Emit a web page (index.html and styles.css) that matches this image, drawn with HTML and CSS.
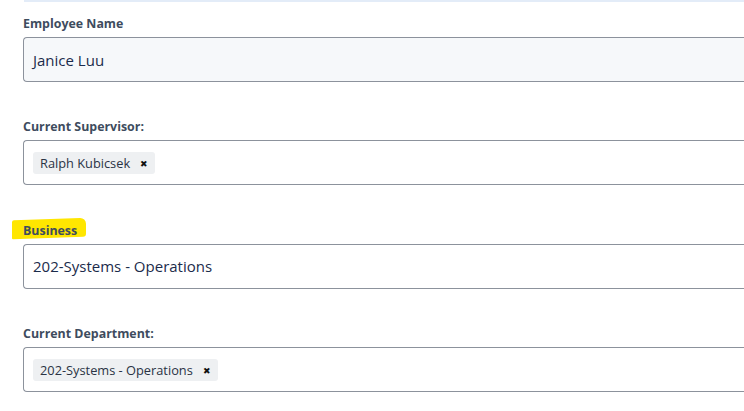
FILE: index.html
```html
<!DOCTYPE html>
<html>
<head>
<meta charset="utf-8">
<link rel="stylesheet" href="styles.css">
</head>
<body>
<div class="page">
  <div class="topline"></div>
  <div class="form">
    <div class="field">
      <label class="label">Employee Name</label>
      <div class="box readonly"><span class="value">Janice Luu</span></div>
    </div>
    <div class="field">
      <label class="label">Current Supervisor:</label>
      <div class="box"><span class="tag">Ralph Kubicsek<span class="x">&#x2716;</span></span></div>
    </div>
    <div class="field">
      <label class="label"><span class="hl">Business</span></label>
      <div class="box"><span class="value">202-Systems - Operations</span></div>
    </div>
    <div class="field">
      <label class="label">Current Department:</label>
      <div class="box"><span class="tag">202-Systems - Operations<span class="x">&#x2716;</span></span></div>
    </div>
  </div>
</div>
</body>
</html>
```
FILE: styles.css
```css
* { box-sizing: border-box; }
html, body { margin: 0; padding: 0; background: #fff; }
body { font-family: "Open Sans", "Noto Sans", sans-serif; }
.page { width: 744px; height: 411px; overflow: hidden; }
.topline { margin-left: 24px; height: 2px; background: #e3ecf8; }
.form { padding: 12px 0 0 23px; display: flex; flex-direction: column; gap: 35.4px; }
.field { display: flex; flex-direction: column; }
.label { font-size: 12.4px; font-weight: 700; line-height: 20px; color: #3e4c5e; margin-bottom: 3px; position: relative; z-index: 0; }
.hl { position: relative; display: inline-block; }
.hl::before { content: ""; position: absolute; left: -11px; top: -2px; width: 74px; height: 19px; background: #ffe600; z-index: -1; transform: skewY(-2deg); border-radius: 2px 6px 3px 1px; }
.box { height: 45px; width: 740px; border: 1px solid #8c929c; border-right: none; border-radius: 4px 0 0 4px; display: flex; align-items: center; padding-left: 9px; background: #fff; }
.box.readonly { background: #f6f8fa; }
.value { font-size: 15px; color: #1b2b4b; }
.tag { display: inline-flex; align-items: center; height: 22px; margin-top: 1px; background: #eef0f2; border-radius: 3px; padding: 0 7px 0 7px; font-size: 12.8px; color: #2a3344; }
.x { font-size: 9px; margin-left: 10px; color: #111; }
```
